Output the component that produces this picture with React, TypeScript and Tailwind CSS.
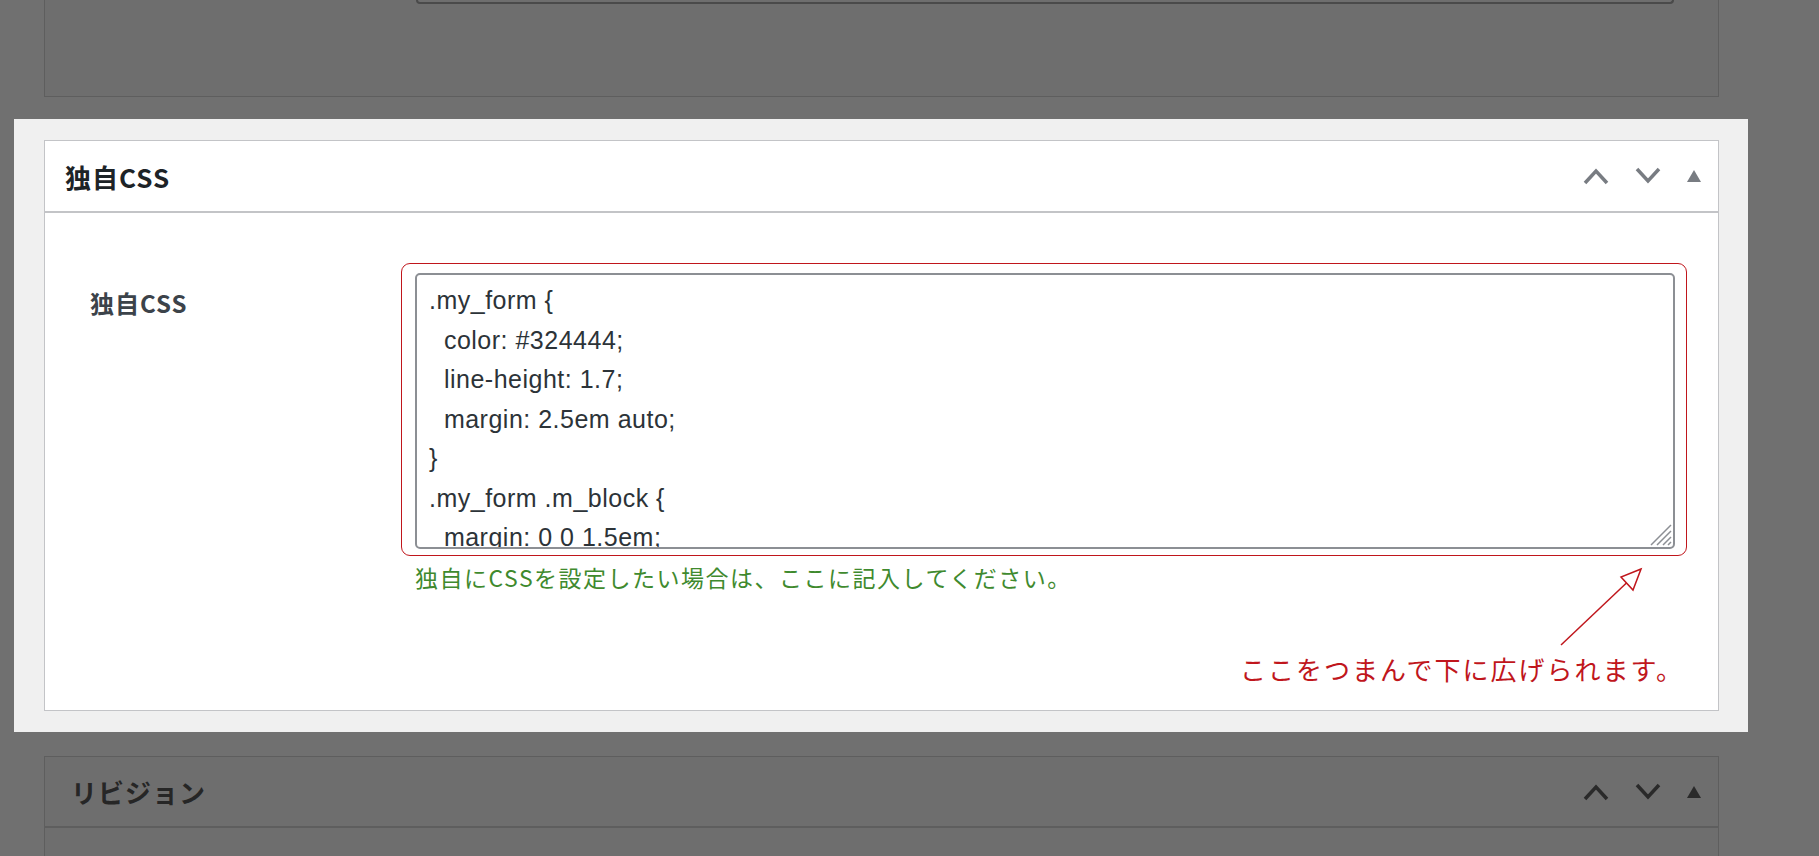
import React from "react";

const font = { fontFamily: '"Noto Sans CJK JP", "Noto Sans", sans-serif' };

const css = `.my_form {
  color: #324444;
  line-height: 1.7;
  margin: 2.5em auto;
}
.my_form .m_block {
  margin: 0 0 1.5em;
  padding: 0;
}`;

function Controls({ dark }: { dark?: boolean }) {
  const c = dark ? "#2a2a2a" : "#787c82";
  return (
    <div className="flex items-center gap-[24px] pr-[16px]">
      <svg width="28" height="20" viewBox="0 0 28 20">
        <path d="M3 17 L14 5 L25 17" fill="none" stroke={c} strokeWidth="3.5" />
      </svg>
      <svg width="28" height="20" viewBox="0 0 28 20">
        <path d="M3 3 L14 15 L25 3" fill="none" stroke={c} strokeWidth="3.5" />
      </svg>
      <svg width="16" height="14" viewBox="0 0 16 14">
        <path d="M8 1 L15 13 L1 13 Z" fill={c} />
      </svg>
    </div>
  );
}

export default function App() {
  return (
    <div className="w-[1819px] h-[856px] overflow-hidden bg-[#707070]" style={font}>
      {/* top cut-off panel */}
      <div className="ml-[44px] w-[1675px] h-[97px] border-x border-b border-[#5e5e5e] bg-[#6e6e6e]">
        <div className="ml-[371px] w-[1258px] h-[4px] border-x-2 border-b-2 border-[#4a4a4a] rounded-b-[4px]" />
      </div>

      {/* highlighted area */}
      <div className="mt-[22px] ml-[14px] w-[1734px] bg-[#f0f0f0] pt-[21px] pb-[21px] pl-[30px]">
        <div className="w-[1675px] h-[571px] bg-white border border-[#c3c4c7] flex flex-col">
          <div className="h-[72px] flex items-center justify-between border-b-2 border-[#c3c4c7] pl-[20px]">
            <span className="text-[26px] font-bold tracking-[1px] text-[#1d2327]">独自CSS</span>
            <Controls />
          </div>
          <div className="flex pt-[50px]">
            <div className="w-[356px] pl-[45px] pt-[22px]">
              <span className="text-[24px] font-bold tracking-[1px] text-[#3c434a]">独自CSS</span>
            </div>
            <div className="relative w-[1286px]">
              <div className="border border-[#c0161c] rounded-[9px] pt-[9px] pl-[13px] pr-[11px] pb-[6px]">
                <div className="relative h-[276px] border-2 border-[#8c8f94] rounded-[5px] overflow-hidden pl-[12px] pt-[6px]">
                  <pre
                    className="text-[25px] leading-[39.5px] tracking-[0.5px] text-[#2c3338] whitespace-pre"
                    style={{ fontFamily: '"Liberation Sans", "Noto Sans", sans-serif' }}
                  >
                    {css}
                  </pre>
                  <svg className="absolute right-[1px] bottom-[1px]" width="24" height="24" viewBox="0 0 24 24">
                    <path d="M23 3 L3 23 M23 9 L9 23 M23 15 L15 23 M23 20 L20 23" stroke="#8c8f94" strokeWidth="1.5" />
                  </svg>
                </div>
              </div>
              <div className="pl-[14px] mt-[4px] text-[23px] tracking-[1.5px] text-[#3f8a2e]">
                独自にCSSを設定したい場合は、ここに記入してください。
              </div>
              <svg className="absolute left-[1150px] top-[300px]" width="100" height="90" viewBox="0 0 100 90">
                <path d="M10 82 L86 10" stroke="#c0161c" strokeWidth="1.5" fill="none" />
                <path d="M90 6 L70 14 L82 27 Z" stroke="#c0161c" strokeWidth="1.5" fill="white" />
              </svg>
              <div className="mt-[54px] pr-[3px] text-right text-[26px] tracking-[2px] text-[#c0161c]">
                ここをつまんで下に広げられます。
              </div>
            </div>
          </div>
        </div>
      </div>

      {/* revisions panel */}
      <div className="mt-[24px] ml-[44px] w-[1675px] h-[200px] border border-[#5e5e5e] bg-[#6e6e6e]">
        <div className="h-[71px] flex items-center justify-between border-b-2 border-[#5e5e5e] pl-[26px]">
          <span className="text-[26px] font-bold tracking-[1px] text-[#262626]">リビジョン</span>
          <Controls dark />
        </div>
      </div>
    </div>
  );
}
